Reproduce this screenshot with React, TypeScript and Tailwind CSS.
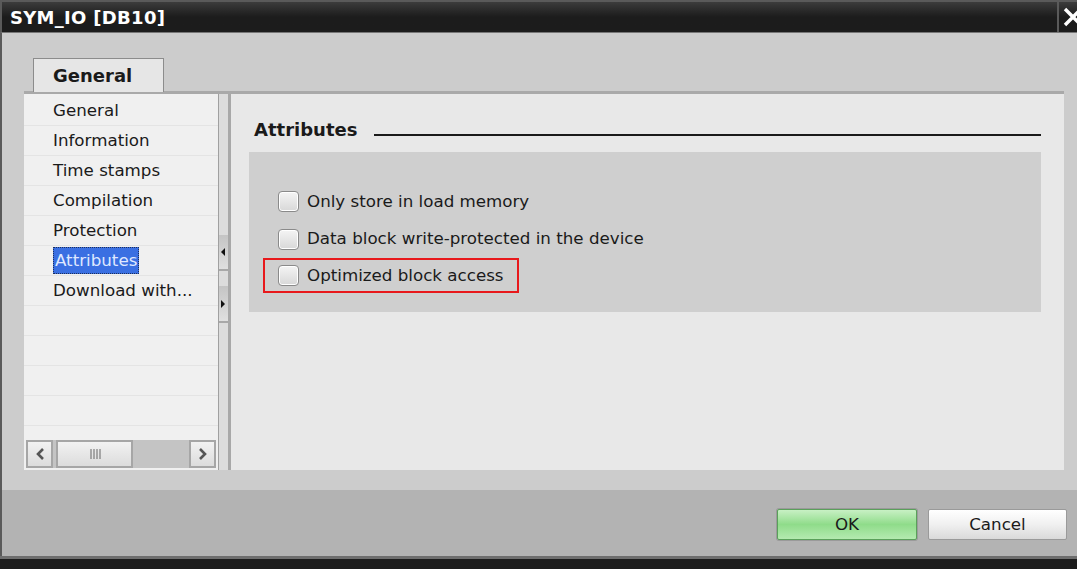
import React from "react";

const navItems = [
  "General",
  "Information",
  "Time stamps",
  "Compilation",
  "Protection",
  "Attributes",
  "Download with...",
  "",
  "",
  "",
  "",
];

function Checkbox() {
  return (
    <div className="w-[21px] h-[21px] shrink-0 rounded-[4px] border border-[#8a8a8a] bg-gradient-to-b from-[#f4f4f4] to-[#d8d8d8] shadow-[inset_0_0_0_1px_#ffffff]" />
  );
}

export default function App() {
  return (
    <div className="w-[1077px] h-[569px] bg-[#cccccc] flex flex-col overflow-hidden font-['DejaVu_Sans',sans-serif]">
      {/* Title bar */}
      <div className="h-[33px] flex shrink-0 border-t-2 border-l-2 border-[#5a5a5a] bg-gradient-to-b from-[#3c3c3c] via-[#1c1c1c] to-[#1c1c1c] border-b border-b-[#777]">
        <div className="flex-1 flex items-center pl-[8px] text-white font-bold text-[18px] tracking-[0.3px]">
          SYM_IO [DB10]
        </div>
        <div className="w-[20px] border-l-2 border-[#5a5a5a] flex items-center overflow-hidden pl-[4px]">
          <svg width="20" height="20" viewBox="0 0 20 20" className="shrink-0">
            <path d="M2 2 L18 18 M18 2 L2 18" stroke="#ffffff" strokeWidth="3.4" />
          </svg>
        </div>
      </div>

      {/* Body */}
      <div className="flex-1 flex flex-col border-l-2 border-[#5a5a5a] pl-[22px] pr-[13px] pt-[25px] pb-[20px]">
        {/* Tab */}
        <div className="flex">
          <div className="ml-[9px] w-[131px] h-[34px] -mb-[1px] bg-[#e6e6e6] border border-[#8c8c8c] border-b-0 flex items-center pl-[19px] text-[18px] font-bold text-[#1a1a1a] relative z-10">
            General
          </div>
        </div>
        {/* Panel */}
        <div className="flex-1 flex flex-col border-t-[3px] border-[#a9a9a9]">
          <div className="flex-1 flex">
            {/* Nav */}
            <div className="w-[194px] bg-[#f0f0f0] flex flex-col">
              <div className="flex-1 overflow-hidden pt-[2px]">
                {navItems.map((item, i) => (
                  <div
                    key={i}
                    className="h-[30px] border-b border-[#e4e4e4] flex items-center pl-[29px] text-[16.7px] text-[#1a1a1a]"
                  >
                    {item === "Attributes" ? (
                      <span className="bg-[#3a6fe2] text-[#dfe8ff] px-[1px] h-[27px] flex items-center border border-dotted border-[#1d2f5a]">
                        {item}
                      </span>
                    ) : (
                      <span className="whitespace-nowrap">{item}</span>
                    )}
                  </div>
                ))}
              </div>
              {/* Horizontal scrollbar */}
              <div className="h-[28px] mx-[2px] mb-[2px] bg-[#c4c4c4] flex">
                <div className="w-[27px] border-2 border-[#a6a6a6] bg-gradient-to-b from-[#f2f2f2] to-[#dcdcdc] flex items-center justify-center">
                  <svg width="12" height="14" viewBox="0 0 12 14">
                    <path d="M9 2 L4 7 L9 12" stroke="#555" strokeWidth="2.6" fill="none" />
                  </svg>
                </div>
                <div className="ml-[3px] w-[77px] border-2 border-[#a6a6a6] bg-gradient-to-b from-[#f2f2f2] to-[#dcdcdc] flex items-center justify-center">
                  <svg width="12" height="12" viewBox="0 0 12 12">
                    <path d="M2 1 V11 M5 1 V11 M8 1 V11 M11 1 V11" stroke="#666" strokeWidth="1" />
                  </svg>
                </div>
                <div className="flex-1" />
                <div className="w-[27px] border-2 border-[#a6a6a6] bg-gradient-to-b from-[#f2f2f2] to-[#dcdcdc] flex items-center justify-center">
                  <svg width="12" height="14" viewBox="0 0 12 14">
                    <path d="M3 2 L8 7 L3 12" stroke="#555" strokeWidth="2.6" fill="none" />
                  </svg>
                </div>
              </div>
            </div>

            {/* Splitter */}
            <div className="w-[13px] bg-[#dcdcdc] border-l border-[#a0a0a0] border-r-[3px] border-r-[#a8a8a8] flex flex-col pt-[141px]">
              <div className="h-[36px] bg-gradient-to-b from-[#c4c4c4] to-[#e0e0e0] border-b-2 border-[#a8a8a8] flex items-center">
                <svg width="6" height="10" viewBox="0 0 6 10" className="ml-[1px]">
                  <path d="M5 1 L1 5 L5 9 Z" fill="#111" />
                </svg>
              </div>
              <div className="h-[15px]" />
              <div className="h-[37px] bg-gradient-to-b from-[#c4c4c4] to-[#e0e0e0] border-b-2 border-[#a8a8a8] flex items-center">
                <svg width="6" height="10" viewBox="0 0 6 10" className="ml-[1px]">
                  <path d="M1 1 L5 5 L1 9 Z" fill="#111" />
                </svg>
              </div>
            </div>

            {/* Content */}
            <div className="flex-1 bg-[#e8e8e8] pl-[18px] pr-[23px] pt-[20px]">
              <div className="flex items-end h-[25px]">
                <div className="pl-[5px] text-[18px] font-bold text-[#1a1a1a] leading-none">Attributes</div>
                <div className="flex-1 ml-[17px] mb-[3px] border-b-2 border-[#1a1a1a]" />
              </div>
              <div className="mt-[13px] h-[160px] bg-[#cfcfcf] pt-[31px] pl-[14px] flex flex-col">
                <div className="h-[37px] flex items-center pl-[15px] gap-[8px] text-[16.7px] text-[#1a1a1a]">
                  <Checkbox />
                  <span className="whitespace-nowrap">Only store in load memory</span>
                </div>
                <div className="h-[38px] flex items-center pl-[15px] gap-[8px] text-[16.7px] text-[#1a1a1a]">
                  <Checkbox />
                  <span className="whitespace-nowrap">Data block write-protected in the device</span>
                </div>
                <div className="h-[35px] w-[256px] border-2 border-[#e8191c] flex items-center pl-[13px] gap-[8px] text-[16.7px] text-[#1a1a1a]">
                  <Checkbox />
                  <span className="whitespace-nowrap">Optimized block access</span>
                </div>
              </div>
            </div>
          </div>
        </div>
      </div>

      {/* Footer */}
      <div className="h-[66px] shrink-0 bg-[#b3b3b3] border-l-2 border-[#5a5a5a] flex items-start justify-end pt-[19px] pr-[10px] gap-[11px]">
        <div className="w-[140px] h-[31px] rounded-[2px] border border-[#5aa05a] bg-gradient-to-b from-[#c8f0c4] via-[#8fdc8a] to-[#b4eab0] flex items-center justify-center text-[16.7px] text-[#1a1a1a] shadow-[0_0_0_1px_#9a9a9a]">
          OK
        </div>
        <div className="w-[139px] h-[31px] rounded-[2px] border border-[#9a9a9a] bg-gradient-to-b from-[#ffffff] via-[#f0f0f0] to-[#dadada] flex items-center justify-center text-[16.7px] text-[#1a1a1a]">
          Cancel
        </div>
      </div>
      <div className="h-[13px] shrink-0 bg-[#1c1c1c] border-t-[3px] border-[#6e6e6e]" />
    </div>
  );
}
